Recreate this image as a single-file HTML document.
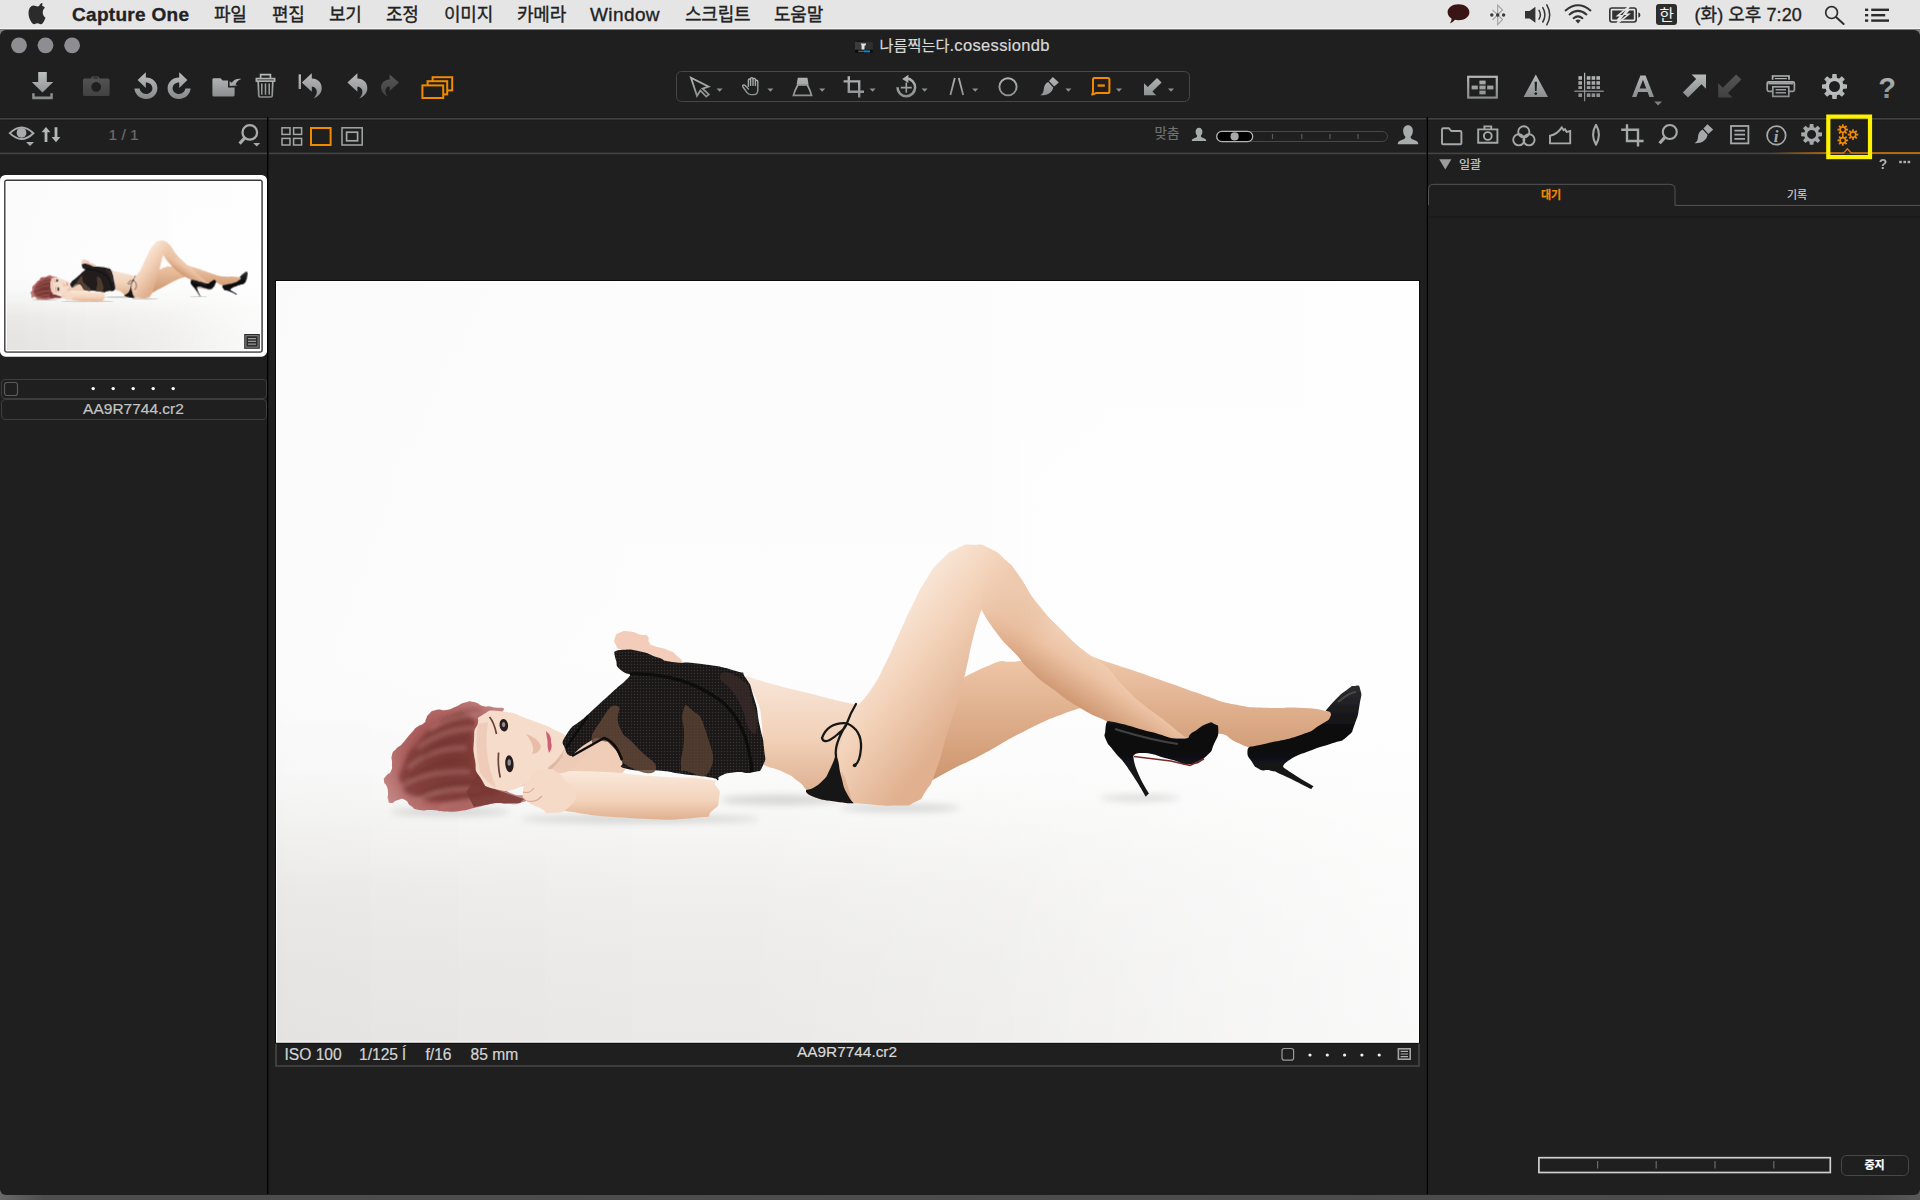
<!DOCTYPE html>
<html lang="ko">
<head>
<meta charset="utf-8">
<title>Capture One</title>
<style>
html,body{margin:0;padding:0;}
body{width:1920px;height:1200px;overflow:hidden;background:#7c7c7c;position:relative;
 font-family:"Liberation Sans","Noto Sans CJK KR",sans-serif;color:#ccc;-webkit-font-smoothing:antialiased;}
.abs{position:absolute;}
#menubar{left:0;top:0;width:1920px;height:28px;background:#e5e5e5;border-bottom:1.600px solid #f1f1f1;color:#222;}
#menubar span{-webkit-text-stroke:0.350px #222;position:absolute;top:4px;font-size:18px;line-height:22px;white-space:nowrap;letter-spacing:-0.2px;}
#win{left:0;top:29.600px;width:1920px;height:1165px;background:#1f1f1f;border-radius:6px 6px 6px 6px;overflow:hidden;}
.hl{position:absolute;height:1px;background:#3e3e3e;}
.vl{position:absolute;width:1px;background:#000;}
.t{position:absolute;white-space:nowrap;-webkit-text-stroke:0.200px currentColor;}
#title{left:879.500px;top:35.500px;font-size:15.2px;line-height:18px;color:#d8d8d8;}
.rr{position:absolute;box-sizing:border-box;border:1px solid #3d3d3d;border-radius:4px;}
#svgall{position:absolute;left:0;top:0;}
</style>
</head>
<body>
<!-- macOS menu bar -->
<div id="menubar" class="abs">
 <span style="left:72px;font-weight:bold;font-size:19px;letter-spacing:0.3px;">Capture One</span>
 <span style="left:214px;">파일</span>
 <span style="left:272px;">편집</span>
 <span style="left:329px;">보기</span>
 <span style="left:386px;">조정</span>
 <span style="left:444px;">이미지</span>
 <span style="left:517px;">카메라</span>
 <span style="left:590px;font-size:19px;letter-spacing:0.4px;">Window</span>
 <span style="left:685px;">스크립트</span>
 <span style="left:774px;">도움말</span>
 <span style="left:1694.5px;letter-spacing:0.05px;">(화) 오후 7:20</span>
</div>

<!-- desktop strip under the window -->
<div class="abs" style="left:0;top:1180px;width:1920px;height:20px;background:linear-gradient(90deg,#6a6a6a 0,#4d4d4d 45px,#4b4b4b 1870px,#585858 1920px);"></div>
<!-- application window -->
<div id="win" class="abs"></div>

<div class="t" id="title">나름찍는다<span style="font-size:16.5px;letter-spacing:0.35px;">.cosessiondb</span></div>

<!-- separators -->
<div class="hl" style="left:0;top:117px;width:1920px;height:4px;background:linear-gradient(#1b1b1b 0 25%,#424242 25% 50%,#333 50% 75%,#1b1b1b 75%);"></div>
<div class="hl" style="left:0;top:152px;width:1920px;height:3px;background:linear-gradient(#2c2c2c 0 33.300%,#434343 33.300% 66.600%,#272727 66.600%);"></div>
<div class="vl" style="left:267px;top:117px;height:1077px;width:2px;background:linear-gradient(90deg,#000 0 50%,#141414 50%);"></div>
<div class="vl" style="left:1426px;top:117px;height:1077px;width:2px;background:linear-gradient(90deg,#171717 0 50%,#000 50%);"></div>

<!-- browser panel (left) -->
<div class="t" style="left:108.5px;top:126px;font-size:15.5px;line-height:17px;color:#6c6c6c;">1 / 1</div>
<div class="rr" style="left:1px;top:379px;width:266px;height:20px;"></div>
<div class="rr" style="left:1px;top:399px;width:266px;height:21px;"></div>
<div class="t" style="left:1px;top:400px;width:265px;text-align:center;font-size:15.500px;line-height:18px;color:#c4c4c4;">AA9R7744.cr2</div>

<!-- viewer -->
<div class="t" style="left:1154.5px;top:126px;font-size:13.5px;line-height:16px;color:#707070;">맞춤</div>
<div class="abs" style="left:275px;top:1043px;width:1145px;height:24px;box-sizing:border-box;border:2px solid #3e3e3e;border-top:none;"></div>
<div class="t" style="left:284.500px;top:1045.500px;font-size:15.600px;line-height:17px;color:#d4d4d4;">ISO 100</div>
<div class="t" style="left:359px;top:1045.500px;font-size:15.600px;line-height:17px;color:#d4d4d4;">1/125 ĺ</div>
<div class="t" style="left:425.500px;top:1045.500px;font-size:15.600px;line-height:17px;color:#d4d4d4;">f/16</div>
<div class="t" style="left:470.500px;top:1045.500px;font-size:15.600px;line-height:17px;color:#d4d4d4;">85 mm</div>
<div class="t" style="left:747px;top:1043px;width:200px;text-align:center;font-size:15.4px;line-height:17px;color:#d8d8d8;">AA9R7744.cr2</div>

<!-- tool panel (right) -->
<div class="abs" style="left:1428px;top:216px;width:492px;height:1.500px;background:#1b1b1b;"></div>
<div class="t" style="left:1459px;top:157px;font-size:12px;line-height:16px;color:#d0d0d0;">일괄</div>
<div class="t" style="left:1531px;top:186.800px;width:40px;text-align:center;font-size:11px;line-height:16px;color:#f28a00;font-weight:bold;">대기</div>
<div class="t" style="left:1777px;top:186.800px;width:40px;text-align:center;font-size:11px;line-height:16px;color:#d0d0d0;">기록</div>
<div class="abs" style="left:1840.500px;top:1154.500px;width:68px;height:21px;box-sizing:border-box;border:1.300px solid #484848;border-radius:5.500px;"></div>
<div class="t" style="left:1841px;top:1157px;width:67px;text-align:center;font-size:11px;line-height:16px;color:#fff;font-weight:bold;">중지</div>

<!-- icons / vector overlay -->
<svg id="svgall" width="1920" height="1200" viewBox="0 0 1920 1200">
<defs>
 <linearGradient id="bgv" gradientUnits="userSpaceOnUse" x1="0" y1="281" x2="0" y2="1043">
  <stop offset="0" stop-color="#fcfcfc"/><stop offset="0.5" stop-color="#fdfdfd"/><stop offset="0.64" stop-color="#fbfbfb"/><stop offset="0.70" stop-color="#f7f7f6"/><stop offset="0.80" stop-color="#f0efee"/><stop offset="0.90" stop-color="#ecebea"/><stop offset="1" stop-color="#eae9e7"/>
 </linearGradient>
 <linearGradient id="bgh" gradientUnits="userSpaceOnUse" x1="276" y1="0" x2="1419" y2="0">
  <stop offset="0" stop-color="#000" stop-opacity="0.018"/><stop offset="0.35" stop-color="#000" stop-opacity="0"/><stop offset="0.6" stop-color="#fff" stop-opacity="0"/><stop offset="1" stop-color="#fff" stop-opacity="0.4"/>
 </linearGradient>
 <linearGradient id="skA" gradientUnits="userSpaceOnUse" x1="890" y1="615" x2="985" y2="690">
  <stop offset="0" stop-color="#f9e7d8"/><stop offset="0.4" stop-color="#f3d3ba"/><stop offset="1" stop-color="#e0b08f"/>
 </linearGradient>
 <linearGradient id="skShin" gradientUnits="userSpaceOnUse" x1="1075" y1="625" x2="1040" y2="680">
  <stop offset="0" stop-color="#f4d6be"/><stop offset="0.5" stop-color="#ecc3a4"/><stop offset="1" stop-color="#d19a75"/>
 </linearGradient>
 <linearGradient id="skB" gradientUnits="userSpaceOnUse" x1="0" y1="660" x2="0" y2="780">
  <stop offset="0" stop-color="#eec5a6"/><stop offset="1" stop-color="#cd966f"/>
 </linearGradient>
 <linearGradient id="skC" gradientUnits="userSpaceOnUse" x1="0" y1="655" x2="0" y2="750">
  <stop offset="0" stop-color="#f0c8aa"/><stop offset="1" stop-color="#d29d78"/>
 </linearGradient>
 <linearGradient id="skT" gradientUnits="userSpaceOnUse" x1="0" y1="675" x2="0" y2="805">
  <stop offset="0" stop-color="#f8e6d8"/><stop offset="0.5" stop-color="#f1d0b7"/><stop offset="1" stop-color="#d9a988"/>
 </linearGradient>
 <linearGradient id="skArm" gradientUnits="userSpaceOnUse" x1="0" y1="770" x2="0" y2="820">
  <stop offset="0" stop-color="#fae9dc"/><stop offset="0.6" stop-color="#f3d3bb"/><stop offset="1" stop-color="#e0b08e"/>
 </linearGradient>
 <radialGradient id="hairg" gradientUnits="userSpaceOnUse" cx="450" cy="760" r="75">
  <stop offset="0" stop-color="#84403c"/><stop offset="0.55" stop-color="#a85a58"/><stop offset="1" stop-color="#c58a88"/>
 </radialGradient>
 <linearGradient id="shoeg" gradientUnits="userSpaceOnUse" x1="0" y1="690" x2="0" y2="790">
  <stop offset="0" stop-color="#2a2a2c"/><stop offset="0.4" stop-color="#0d0d0f"/><stop offset="1" stop-color="#161616"/>
 </linearGradient>
 <linearGradient id="shinfade" gradientUnits="userSpaceOnUse" x1="990" y1="570" x2="1050" y2="640">
  <stop offset="0" stop-color="#000"/><stop offset="1" stop-color="#fff"/>
 </linearGradient>
 <mask id="shinmask" maskUnits="userSpaceOnUse" x="900" y="500" width="400" height="300"><rect x="900" y="500" width="400" height="300" fill="url(#shinfade)"/></mask>
 <linearGradient id="bgw" gradientUnits="userSpaceOnUse" x1="276" y1="0" x2="1419" y2="0">
  <stop offset="0" stop-color="#000" stop-opacity="0.008"/><stop offset="0.4" stop-color="#fff" stop-opacity="0"/><stop offset="1" stop-color="#fff" stop-opacity="0.6"/>
 </linearGradient>
 <linearGradient id="floorfade" gradientUnits="userSpaceOnUse" x1="0" y1="700" x2="0" y2="900">
  <stop offset="0" stop-color="#000"/><stop offset="1" stop-color="#fff"/>
 </linearGradient>
 <mask id="floormask" maskUnits="userSpaceOnUse" x="276" y="281" width="1143" height="762"><rect x="276" y="281" width="1143" height="762" fill="url(#floorfade)"/></mask>
 <pattern id="mesh" width="3" height="3" patternUnits="userSpaceOnUse"><rect width="3" height="3" fill="#1a1818"/><circle cx="1.5" cy="1.5" r="0.7" fill="#3b3230"/></pattern>
 <filter id="soft" x="-5%" y="-5%" width="110%" height="110%"><feGaussianBlur stdDeviation="0.7"/></filter>
 <filter id="soft2" x="-10%" y="-10%" width="120%" height="120%"><feGaussianBlur stdDeviation="2.2"/></filter>
 <filter id="shadow" x="-20%" y="-80%" width="140%" height="260%"><feGaussianBlur stdDeviation="3.5"/></filter>
 <g id="photoart">
  <rect x="276" y="281" width="1143" height="761.500" fill="url(#bgv)"/>
  <rect x="276" y="281" width="1143" height="761.500" fill="url(#bgh)" mask="url(#floormask)"/>
  <rect x="276" y="281" width="1143" height="761.500" fill="url(#bgw)"/>
  <g filter="url(#shadow)" fill="#8f8f8f" opacity="0.32">
   <ellipse cx="640" cy="819" rx="120" ry="4"/>
   <ellipse cx="780" cy="800" rx="60" ry="5"/>
   <ellipse cx="900" cy="808" rx="60" ry="4"/>
   <ellipse cx="450" cy="812" rx="60" ry="4"/>
   <ellipse cx="1140" cy="798" rx="40" ry="3"/>
  </g>
  <g filter="url(#soft)">
   <path d="M1090.0 656.0 C1090.0 656.0 1088.4 655.6 1104.5 661.0 C1120.6 666.4 1116.3 664.8 1138.4 672.3 C1160.5 679.8 1149.2 676.1 1170.7 683.6 C1192.2 691.1 1181.5 687.9 1203.0 694.9 C1224.5 701.9 1213.8 700.3 1235.3 704.6 C1256.8 708.9 1246.1 706.7 1267.6 707.8 C1289.1 708.9 1280.5 706.7 1299.9 707.8 C1319.3 708.9 1313.7 708.3 1325.7 711.0 C1337.7 713.7 1336.0 716.0 1336.0 716.0 C1336.0 716.0 1337.3 722.3 1320.0 731.0 C1302.7 739.7 1306.0 736.0 1284.0 742.0 C1262.0 748.0 1266.5 747.5 1254.0 749.0 C1241.5 750.5 1252.8 749.0 1246.6 746.6 C1240.4 744.2 1245.0 746.0 1235.3 741.7 C1225.6 737.4 1230.9 734.8 1217.5 733.6 C1204.1 732.4 1195.0 738.0 1195.0 738.0 C1195.0 738.0 1177.7 740.0 1150.0 730.0 C1122.3 720.0 1130.0 724.7 1112.0 708.0 C1094.0 691.3 1103.3 697.3 1096.0 680.0 C1088.7 662.7 1090.0 656.0 1090.0 656.0 Z" fill="url(#skC)"/>
   <path d="M1325.7 711.0 C1325.7 711.0 1328.4 706.7 1335.4 699.7 C1342.4 692.7 1340.2 694.6 1346.7 690.0 C1353.2 685.4 1350.2 686.0 1354.8 686.0 C1359.4 686.0 1358.8 683.8 1360.4 690.0 C1362.0 696.2 1361.5 693.3 1359.6 704.6 C1357.7 715.9 1359.1 713.2 1354.8 724.0 C1350.5 734.8 1354.2 730.5 1346.7 736.9 C1339.2 743.3 1343.5 739.0 1332.2 743.3 C1320.9 747.6 1326.8 744.4 1312.8 749.8 C1298.8 755.2 1299.9 753.6 1290.2 759.5 C1280.5 765.4 1283.7 767.5 1283.7 767.5 C1283.7 767.5 1288.3 771.0 1298.3 777.2 C1308.3 783.4 1313.6 786.1 1313.6 786.1 C1313.6 786.1 1311.2 789.3 1311.2 789.3 C1311.2 789.3 1297.2 781.8 1283.7 775.6 C1270.2 769.4 1278.9 772.9 1270.8 770.8 C1262.7 768.7 1266.0 772.4 1259.5 769.2 C1253.0 766.0 1255.4 767.0 1251.4 761.1 C1247.4 755.2 1247.4 756.2 1247.4 751.4 C1247.4 746.6 1251.4 746.6 1251.4 746.6 C1251.4 746.6 1251.4 747.1 1267.6 743.3 C1283.8 739.5 1282.7 741.2 1299.9 735.3 C1317.1 729.4 1309.1 732.1 1319.3 725.6 C1329.5 719.1 1328.5 720.8 1330.6 715.9 C1332.7 711.0 1325.7 711.0 1325.7 711.0 Z" fill="url(#shoeg)"/>
   <path d="M945.0 690.0 C945.0 690.0 962.7 676.2 985.8 666.8 C1008.9 657.4 996.3 662.6 1014.4 661.7 C1032.5 660.8 1021.5 654.6 1040.0 664.0 C1058.5 673.4 1055.0 675.3 1070.0 690.0 C1085.0 704.7 1085.0 708.0 1085.0 708.0 C1085.0 708.0 1084.2 705.7 1063.4 713.8 C1042.6 721.9 1049.7 718.6 1022.5 732.2 C995.3 745.8 1006.2 741.8 981.7 754.7 C957.2 767.6 971.2 759.2 949.0 771.0 C926.8 782.8 915.0 790.0 915.0 790.0 C915.0 790.0 915.0 773.3 925.0 740.0 C935.0 706.7 945.0 690.0 945.0 690.0 Z" fill="url(#skB)"/>
   <path d="M615.0 638.0 C616.3 633.8 615.0 634.7 620.0 632.5 C625.0 630.3 623.3 630.8 630.0 631.5 C636.7 632.2 634.2 633.0 640.0 634.5 C645.8 636.0 644.4 633.2 647.5 636.0 C650.6 638.8 646.8 639.4 649.3 642.8 C651.8 646.2 649.1 644.0 655.0 646.3 C660.9 648.6 660.0 646.9 667.0 649.8 C674.0 652.7 671.7 650.6 676.0 655.0 C680.3 659.4 685.3 661.3 680.0 663.0 C674.7 664.7 673.3 663.3 660.0 660.0 C646.7 656.7 652.7 656.3 640.0 653.0 C627.3 649.7 630.0 652.7 622.0 650.0 C614.0 647.3 618.3 649.0 616.0 645.0 C613.7 641.0 613.7 642.2 615.0 638.0 Z" fill="#f3cdb9"/>
   <path d="M740.0 674.0 C740.0 674.0 751.7 678.3 775.0 684.8 C798.3 691.3 786.7 687.7 810.0 693.5 C833.3 699.3 827.7 698.5 845.0 702.3 C862.3 706.1 862.0 705.0 862.0 705.0 C862.0 705.0 870.0 727.3 868.0 760.0 C866.0 792.7 856.0 803.0 856.0 803.0 C856.0 803.0 852.2 804.1 838.0 802.0 C823.8 799.9 824.0 800.9 813.5 796.8 C803.0 792.7 811.7 795.1 806.5 789.8 C801.3 784.5 805.4 786.8 797.8 781.0 C790.2 775.2 794.9 777.5 783.8 772.3 C772.7 767.1 773.1 769.4 764.5 765.3 C755.9 761.2 758.0 760.0 758.0 760.0 C758.0 760.0 764.0 748.3 762.0 725.0 C760.0 701.7 759.3 707.0 752.0 690.0 C744.7 673.0 740.0 674.0 740.0 674.0 Z" fill="url(#skT)"/>
   <path d="M859.0 704.0 C859.0 704.0 864.2 699.9 873.0 686.5 C881.8 673.1 876.3 682.0 885.3 663.8 C894.3 645.6 891.0 651.4 900.0 632.0 C909.0 612.6 903.4 623.3 912.3 605.6 C921.2 587.9 917.1 594.0 926.6 579.0 C936.1 564.0 930.6 570.8 940.8 560.6 C951.0 550.4 946.3 553.7 957.2 548.4 C968.1 543.1 962.6 544.7 973.5 544.7 C984.4 544.7 979.0 543.1 989.9 548.4 C1000.8 553.7 996.7 551.7 1006.2 560.6 C1015.7 569.5 1007.6 560.0 1018.5 575.0 C1029.4 590.0 1023.9 586.6 1038.9 605.6 C1053.9 624.6 1049.7 617.9 1063.4 632.0 C1077.1 646.1 1080.0 648.0 1080.0 648.0 C1080.0 648.0 1062.0 662.0 1062.0 662.0 C1062.0 662.0 1032.0 668.0 1032.0 668.0 C1032.0 668.0 1026.4 664.5 1014.4 652.5 C1002.4 640.5 1006.9 646.3 996.0 632.0 C985.1 617.7 981.7 609.7 981.7 609.7 C981.7 609.7 978.9 615.1 973.5 636.2 C968.1 657.3 970.8 650.5 965.4 673.0 C960.0 695.5 963.3 683.2 957.2 703.6 C951.1 724.0 954.1 711.9 947.0 734.2 C939.9 756.5 943.1 751.4 936.0 770.5 C928.9 789.6 932.6 781.0 925.6 791.5 C918.6 802.0 924.4 797.3 915.0 802.0 C905.6 806.7 915.0 805.0 897.5 805.6 C880.0 806.2 877.7 805.0 862.5 803.8 C847.3 802.6 852.0 802.0 852.0 802.0 C852.0 802.0 850.7 795.7 846.0 780.0 C841.3 764.3 833.7 780.3 838.0 755.0 C842.3 729.7 859.0 704.0 859.0 704.0 Z" fill="url(#skA)"/>
   <path d="M981.7 609.7 C981.7 609.7 981.2 596.6 986.0 580.0 C990.8 563.4 988.7 566.0 996.0 560.0 C1003.3 554.0 1000.5 557.0 1008.0 562.0 C1015.5 567.0 1008.2 560.5 1018.5 575.0 C1028.8 589.5 1023.9 586.6 1038.9 605.6 C1053.9 624.6 1048.4 617.0 1063.4 632.0 C1078.4 647.0 1070.2 639.6 1083.8 650.5 C1097.4 661.4 1090.6 652.5 1104.2 664.8 C1117.8 677.1 1111.7 674.0 1124.7 687.3 C1137.7 700.6 1130.6 694.0 1143.3 704.6 C1156.0 715.2 1150.3 709.4 1162.7 719.1 C1175.1 728.8 1172.6 727.3 1180.4 733.6 C1188.2 739.9 1186.0 738.0 1186.0 738.0 C1186.0 738.0 1176.3 740.5 1150.0 735.0 C1123.7 729.5 1107.0 721.5 1107.0 721.5 C1107.0 721.5 1113.3 724.6 1104.2 720.0 C1095.1 715.4 1096.7 717.9 1079.7 707.7 C1062.7 697.5 1069.5 701.6 1053.2 689.3 C1036.9 677.0 1043.6 683.2 1030.7 670.9 C1017.8 658.6 1026.0 665.5 1014.4 652.5 C1002.8 639.5 1006.9 646.3 996.0 632.0 C985.1 617.7 981.7 609.7 981.7 609.7 Z" fill="url(#skShin)" mask="url(#shinmask)"/>
   <path d="M1107.0 721.5 C1107.0 721.5 1107.5 720.5 1122.3 724.0 C1137.1 727.5 1131.9 727.2 1151.3 732.0 C1170.7 736.8 1166.4 738.5 1180.4 738.5 C1194.4 738.5 1184.7 736.8 1193.3 732.0 C1201.9 727.2 1199.2 726.7 1206.2 724.0 C1213.2 721.3 1210.3 721.9 1214.3 724.0 C1218.3 726.1 1218.3 724.0 1218.3 730.4 C1218.3 736.8 1218.3 734.7 1214.3 743.3 C1210.3 751.9 1214.3 749.2 1206.2 756.2 C1198.1 763.2 1201.8 763.2 1190.0 764.3 C1178.2 765.4 1186.3 763.3 1170.7 759.5 C1155.1 755.7 1155.7 753.5 1143.3 753.0 C1130.9 752.5 1133.6 757.9 1133.6 757.9 C1133.6 757.9 1133.3 762.2 1138.4 774.0 C1143.5 785.8 1148.9 793.4 1148.9 793.4 C1148.9 793.4 1145.7 796.6 1145.7 796.6 C1145.7 796.6 1139.2 784.3 1128.7 769.2 C1118.2 754.1 1121.7 761.1 1114.2 751.4 C1106.7 741.7 1109.1 747.1 1106.1 740.1 C1103.1 733.1 1105.0 736.6 1105.3 730.4 C1105.6 724.2 1107.0 721.5 1107.0 721.5 Z" fill="url(#shoeg)"/>
   <path d="M1134 756.5 L1170.700 761 L1190 765.500 L1204 759" fill="none" stroke="#7a2c26" stroke-width="1.600"/>
   <path d="M1115 729 Q1150 740 1178 744" fill="none" stroke="#55555a" stroke-width="2.200" opacity="0.7"/>
   <path d="M1338 702 Q1350 692 1356 692" fill="none" stroke="#55555a" stroke-width="2.200" opacity="0.7"/>
   <path d="M806.5 789.8 C806.5 789.8 812.3 790.4 820.5 782.8 C828.7 775.2 826.0 776.9 831.0 767.0 C836.0 757.1 835.4 753.0 835.4 753.0 C835.4 753.0 836.0 751.8 838.0 760.0 C840.0 768.2 838.6 766.4 841.5 777.5 C844.4 788.6 842.7 784.8 846.8 793.3 C850.9 801.8 853.8 803.0 853.8 803.0 C853.8 803.0 851.4 804.1 838.0 802.0 C824.6 799.9 824.0 800.9 813.5 796.8 C803.0 792.7 806.5 789.8 806.5 789.8 Z" fill="#171717"/>
   <path d="M856 704 Q850 714 846.800 723.300 M846.800 723.300 Q828 722 822 738 Q824 746 838 734 Q846 728 846.800 723.300 M846.800 723.300 Q834 744 836 756 M846.800 723.300 Q862 730 861 748 Q860 762 855 765" stroke="#191919" stroke-width="2.300" fill="none" stroke-linecap="round"/>
   <circle cx="854.700" cy="765.300" r="1.900" fill="#191919"/>
   <path d="M552.0 768.0 C550.7 760.0 554.0 760.7 566.0 752.0 C578.0 743.3 575.3 746.7 588.0 742.0 C600.7 737.3 594.7 736.7 604.0 738.0 C613.3 739.3 608.7 736.0 616.0 746.0 C623.3 756.0 631.3 758.0 626.0 768.0 C620.7 778.0 618.7 773.3 600.0 776.0 C581.3 778.7 586.0 778.7 570.0 776.0 C554.0 773.3 553.3 776.0 552.0 768.0 Z" fill="#f0cdb7"/>
   <path d="M548.0 772.0 C548.0 772.0 558.3 770.0 595.0 771.5 C631.7 773.0 621.3 774.0 658.0 776.5 C694.7 779.0 685.7 775.8 705.0 779.0 C724.3 782.2 711.3 779.7 716.0 786.0 C720.7 792.3 720.3 789.7 719.0 798.0 C717.7 806.3 720.7 804.3 712.0 811.0 C703.3 817.7 720.3 815.7 693.0 818.0 C665.7 820.3 672.3 820.3 630.0 818.0 C587.7 815.7 593.3 815.0 566.0 811.0 C538.7 807.0 548.0 806.0 548.0 806.0 C548.0 806.0 548.0 772.0 548.0 772.0 Z" fill="url(#skArm)"/>
   <path d="M503.0 711.0 C507.0 706.0 498.7 708.7 492.0 707.0 C485.3 705.3 489.0 707.7 483.0 706.0 C477.0 704.3 480.0 703.2 474.0 702.0 C468.0 700.8 471.3 700.8 465.0 702.5 C458.7 704.2 461.3 704.5 455.0 707.0 C448.7 709.5 452.3 709.0 446.0 710.0 C439.7 711.0 441.7 708.7 436.0 710.0 C430.3 711.3 432.3 711.0 429.0 714.0 C425.7 717.0 427.7 716.0 426.0 719.0 C424.3 722.0 427.0 720.3 424.0 723.0 C421.0 725.7 420.7 724.3 417.0 727.0 C413.3 729.7 416.3 727.3 413.0 731.0 C409.7 734.7 410.7 733.7 407.0 738.0 C403.3 742.3 405.7 740.3 402.0 744.0 C398.3 747.7 399.3 745.3 396.0 749.0 C392.7 752.7 393.3 750.3 392.0 755.0 C390.7 759.7 392.3 757.7 392.0 763.0 C391.7 768.3 393.0 766.7 391.0 771.0 C389.0 775.3 388.3 772.7 386.0 776.0 C383.7 779.3 383.7 777.3 384.0 781.0 C384.3 784.7 385.7 783.0 387.0 787.0 C388.3 791.0 387.7 789.0 388.0 793.0 C388.3 797.0 387.0 795.7 388.0 799.0 C389.0 802.3 387.7 802.7 391.0 803.0 C394.3 803.3 393.3 801.0 398.0 800.0 C402.7 799.0 400.7 798.0 405.0 800.0 C409.3 802.0 406.3 802.7 411.0 806.0 C415.7 809.3 412.0 808.7 419.0 810.0 C426.0 811.3 423.3 809.5 432.0 810.0 C440.7 810.5 435.7 811.2 445.0 811.5 C454.3 811.8 450.3 812.2 460.0 811.0 C469.7 809.8 465.3 810.0 474.0 808.0 C482.7 806.0 478.7 806.7 486.0 805.0 C493.3 803.3 488.7 803.3 496.0 803.0 C503.3 802.7 500.0 804.0 508.0 804.0 C516.0 804.0 514.0 805.3 520.0 803.0 C526.0 800.7 531.0 801.3 526.0 797.0 C521.0 792.7 519.7 799.0 505.0 790.0 C490.3 781.0 491.7 785.0 482.0 770.0 C472.3 755.0 476.7 761.0 476.0 745.0 C475.3 729.0 471.0 733.3 480.0 722.0 C489.0 710.7 499.0 716.0 503.0 711.0 Z" fill="url(#hairg)"/>
   <g filter="url(#soft2)"><path d="M470.0 716.0 C458.7 709.0 457.3 715.3 440.0 724.0 C422.7 732.7 430.0 728.7 418.0 742.0 C406.0 755.3 409.3 749.7 404.0 764.0 C398.7 778.3 396.7 773.7 402.0 785.0 C407.3 796.3 404.0 792.3 420.0 798.0 C436.0 803.7 430.0 802.0 450.0 802.0 C470.0 802.0 464.0 801.3 480.0 798.0 C496.0 794.7 498.0 800.7 498.0 792.0 C498.0 783.3 488.0 787.7 480.0 772.0 C472.0 756.3 477.3 763.7 474.0 745.0 C470.7 726.3 481.3 723.0 470.0 716.0 Z" fill="#74332f" opacity="0.7"/>
   <path d="M430 730 Q450 716 478 714 M418 748 Q440 730 474 728 M408 768 Q430 748 466 748 M402 786 Q428 770 470 772 M416 800 Q446 786 480 790 M440 808 Q466 798 500 800" stroke="#c08480" stroke-width="2.600" fill="none" opacity="0.6"/>
   <path d="M440 722 Q456 712 480 710 M424 756 Q444 738 470 738 M410 778 Q436 760 468 760 M420 794 Q446 780 476 782" stroke="#5f2724" stroke-width="2.400" fill="none" opacity="0.5"/></g>
   <path d="M478 774 Q486 786 497 790 L524 799 L520 803 L496 803 L474 807 L466 792 Z" fill="#783733" opacity="0.85"/>
   <path d="M548.0 768.0 C546.0 761.3 552.0 760.7 560.0 752.0 C568.0 743.3 562.0 754.0 572.0 742.0 C582.0 730.0 580.7 722.7 590.0 716.0 C599.3 709.3 598.0 713.3 600.0 722.0 C602.0 730.7 602.7 729.3 596.0 742.0 C589.3 754.7 590.0 750.0 580.0 760.0 C570.0 770.0 576.7 769.3 566.0 772.0 C555.3 774.7 550.0 774.7 548.0 768.0 Z" fill="#eecbb6"/>
   <path d="M482.5 715.0 C490.8 710.5 486.0 709.7 502.5 711.5 C519.0 713.3 513.8 714.0 532.0 720.5 C550.2 727.0 545.7 725.2 557.0 731.0 C568.3 736.8 562.8 733.0 566.0 738.0 C569.2 743.0 567.7 740.3 566.5 746.0 C565.3 751.7 568.3 748.0 562.5 755.0 C556.7 762.0 558.8 760.3 549.0 767.0 C539.2 773.7 542.7 768.3 533.0 775.0 C523.3 781.7 532.7 782.3 520.0 787.0 C507.3 791.7 508.3 792.3 495.0 789.0 C481.7 785.7 486.7 786.7 480.0 777.0 C473.3 767.3 477.0 772.3 475.0 760.0 C473.0 747.7 473.2 751.7 474.0 740.0 C474.8 728.3 474.7 733.3 477.5 725.0 C480.3 716.7 474.2 719.5 482.5 715.0 Z" fill="#f6dccb"/>
   <path d="M520 787 Q540 776 549 767 Q560 758 566 746 L562 757 Q552 772 534 782 Z" fill="#dcae98" opacity="0.7"/>
   <path d="M489.500 717 Q494 722 496.500 734" stroke="#6b4038" stroke-width="1.700" fill="none"/>
   <path d="M498.600 752.500 Q497.500 765 500.200 777.500" stroke="#6b4038" stroke-width="1.700" fill="none"/>
   <ellipse cx="503.800" cy="725.200" rx="4.300" ry="6.300" fill="#2b1f1f" transform="rotate(-8 503.800 725.200)"/>
   <ellipse cx="509.400" cy="763.800" rx="4.200" ry="8.500" fill="#2b1f1f" transform="rotate(-4 509.400 763.800)"/>
   <ellipse cx="503.600" cy="724.600" rx="1.700" ry="2.600" fill="#8d8d92"/>
   <ellipse cx="509.200" cy="762.500" rx="1.700" ry="3.200" fill="#8d8d92"/>
   <path d="M546 731 Q552 736 551 742 Q553 748 549 753 Q547 746 547.500 741 Q546.500 736 546 731 Z" fill="#cf5f74"/>
   <path d="M526 734 Q538 738 541 746 Q540 753 532 754 Q536 747 526 734 Z" fill="#e3b39c" opacity="0.75"/>
   <path d="M478 724 Q474 745 480 772 Q486 782 496 788 L490 770 Q484 745 488 722 Z" fill="#e9c2ae" opacity="0.6"/>
   <path d="M523.0 792.0 C523.3 785.0 523.7 786.7 528.0 780.0 C532.3 773.3 529.5 775.7 536.0 772.0 C542.5 768.3 540.2 768.7 547.5 769.0 C554.8 769.3 551.8 769.0 558.0 773.0 C564.2 777.0 560.3 775.3 566.0 781.0 C571.7 786.7 573.7 781.7 575.0 790.0 C576.3 798.3 577.7 798.3 570.0 806.0 C562.3 813.7 562.0 812.3 552.0 813.0 C542.0 813.7 548.3 812.0 540.0 808.0 C531.7 804.0 532.7 806.3 527.0 801.0 C521.3 795.7 522.7 799.0 523.0 792.0 Z" fill="#f6dac8"/>
   <path d="M523 792 Q530 794 534 788 M527 801 Q536 803 542 796" stroke="#d9ab92" stroke-width="1.200" fill="none"/>
   <path d="M614.3 652.4 C614.3 652.4 614.3 650.1 623.0 649.8 C631.7 649.5 628.8 648.9 640.5 651.5 C652.2 654.1 647.5 654.1 658.0 657.6 C668.5 661.1 658.0 659.9 672.0 662.0 C686.0 664.1 679.0 660.9 700.0 663.8 C721.0 666.7 719.8 666.1 735.0 670.8 C750.2 675.5 739.2 668.5 745.6 677.8 C752.0 687.1 749.6 683.1 754.3 698.8 C759.0 714.5 756.4 708.7 759.6 725.0 C762.8 741.3 762.9 734.4 764.0 747.8 C765.1 761.2 766.8 757.1 763.0 765.3 C759.2 773.5 761.9 770.0 752.6 772.3 C743.3 774.6 745.5 771.1 735.0 772.3 C724.5 773.5 726.8 773.2 721.0 775.8 C715.2 778.4 721.0 779.6 717.5 780.2 C714.0 780.8 722.2 779.6 710.5 777.5 C698.8 775.4 700.0 776.3 682.5 774.0 C665.0 771.7 676.7 772.2 658.0 770.5 C639.3 768.8 638.7 772.3 626.5 768.8 C614.3 765.3 626.0 767.6 621.3 760.0 C616.6 752.4 618.9 753.0 612.5 746.0 C606.1 739.0 610.2 740.2 602.0 739.0 C593.8 737.8 598.0 736.8 588.0 742.5 C578.0 748.2 572.0 756.0 572.0 756.0 C572.0 756.0 567.0 756.9 565.3 749.5 C563.6 742.1 559.4 745.5 567.0 733.8 C574.6 722.1 573.4 727.9 588.0 714.5 C602.6 701.1 598.0 705.2 610.8 693.5 C623.6 681.8 620.1 685.9 626.5 679.5 C632.9 673.1 630.0 674.3 630.0 674.3 C630.0 674.3 624.2 673.7 619.5 669.0 C614.8 664.3 617.7 665.8 616.0 660.3 C614.3 654.8 614.3 652.4 614.3 652.4 Z" fill="url(#mesh)"/>
   <path d="M600.0 722.0 C608.3 710.0 610.3 704.0 617.0 706.0 C623.7 708.0 613.7 714.7 620.0 728.0 C626.3 741.3 624.0 732.3 636.0 746.0 C648.0 759.7 658.0 762.0 656.0 769.0 C654.0 776.0 644.0 774.0 630.0 767.0 C616.0 760.0 623.0 756.7 614.0 748.0 C605.0 739.3 610.3 743.0 603.0 741.0 C595.7 739.0 593.0 748.3 592.0 742.0 C591.0 735.7 591.7 734.0 600.0 722.0 Z" fill="#5f4536" opacity="0.85"/>
   <path d="M683.0 712.0 C685.7 702.7 684.3 703.3 692.0 710.0 C699.7 716.7 700.0 712.0 706.0 732.0 C712.0 752.0 716.7 757.0 710.0 770.0 C703.3 783.0 695.7 772.3 686.0 771.0 C676.3 769.7 681.7 777.0 681.0 766.0 C680.3 755.0 683.3 756.0 684.0 738.0 C684.7 720.0 680.3 721.3 683.0 712.0 Z" fill="#5a4234" opacity="0.8"/>
   <path d="M720.0 676.0 C721.3 669.3 731.3 672.0 742.0 680.0 C752.7 688.0 747.0 685.3 752.0 700.0 C757.0 714.7 757.7 714.0 757.0 724.0 C756.3 734.0 756.3 738.0 750.0 730.0 C743.7 722.0 748.0 718.0 738.0 700.0 C728.0 682.0 718.7 682.7 720.0 676.0 Z" fill="#3a2e2a" opacity="0.7"/>
   <path d="M630 674 Q680 672 720 700 Q748 722 752 772" fill="none" stroke="#0c0c0c" stroke-width="3.200"/>
   <path d="M566 748 L588 716 M572 756 L604 738 Q616 742 622 760" fill="none" stroke="#0e0e0e" stroke-width="2.400"/>
  </g>
 </g>
</defs>
<!-- photo -->
<rect x="275" y="280" width="1145" height="763.500" fill="#0a0a0a"/>
<use href="#photoart"/>
<rect x="276.500" y="281.500" width="1142" height="760.500" fill="none" stroke="#ffffff" stroke-width="1"/>
<rect x="0" y="175" width="267" height="181.700" rx="5.500" fill="#ffffff"/>
<use href="#photoart" transform="translate(-54.830,119.360) scale(0.2222)"/>
<rect x="4.900" y="180.200" width="257.100" height="171.800" rx="2" fill="none" stroke="#3a3a3a" stroke-width="1.600"/>
<rect x="6.200" y="181.500" width="254.500" height="169.200" fill="none" stroke="#ffffff" stroke-width="1"/>
<!-- thumb badge -->
<rect x="244.200" y="334" width="15.600" height="14.800" fill="#2b2b2b"/>
<rect x="245.900" y="335.700" width="12.200" height="11.400" fill="none" stroke="#8a8a8a" stroke-width="1"/>
<path d="M248 338.700 L256 338.700 M248 341.400 L256 341.400 M248 344.200 L256 344.200" stroke="#9a9a9a" stroke-width="1.300"/>

<defs>
 <linearGradient id="ig" gradientUnits="userSpaceOnUse" x1="0" y1="72" x2="0" y2="100">
  <stop offset="0" stop-color="#bcbfbf"/><stop offset="1" stop-color="#858888"/>
 </linearGradient>
 <linearGradient id="igd" gradientUnits="userSpaceOnUse" x1="0" y1="72" x2="0" y2="100">
  <stop offset="0" stop-color="#585858"/><stop offset="1" stop-color="#3e3e3e"/>
 </linearGradient>
 <path id="dd" d="M0 0 L6 0 L3 3.2 Z" fill="#8e9090"/>
</defs>

<!-- ===== menu bar icons ===== -->
<g id="mb">
 <!-- apple -->
 <path d="M40.6 3.6 C40.7 5 40.2 6.3 39.4 7.3 C38.6 8.3 37.3 9 36.1 8.9 C35.9 7.6 36.5 6.2 37.3 5.3 C38.1 4.3 39.5 3.6 40.6 3.6 Z M44.6 19.2 C44 20.6 43.7 21.2 42.9 22.4 C41.8 24.1 40.3 26.2 38.4 26.2 C36.7 26.2 36.3 25.1 34 25.1 C31.7 25.1 31.2 26.2 29.5 26.2 C27.6 26.2 26.2 24.3 25.1 22.6 C22 17.9 21.7 12.4 23.6 9.5 C24.9 7.4 27 6.2 29 6.2 C31 6.2 32.3 7.3 34 7.3 C35.6 7.3 36.6 6.2 39 6.2 C40.8 6.2 42.6 7.2 43.9 8.8 C39.6 11.2 40.3 17.4 44.6 19.2 Z" transform="translate(11.420,-0.380) scale(0.764,0.938)" fill="#2b2b2b"/>
 <!-- speech bubble -->
 <path d="M1458.5 4.3 C1464.6 4.3 1469.4 7.8 1469.4 12.3 C1469.4 16.8 1464.6 20.3 1458.5 20.3 C1457.2 20.3 1456 20.1 1454.9 19.8 C1453.6 21.4 1451.6 22.9 1449.9 23.4 C1450.9 22.2 1451.6 20.4 1451.5 18.6 C1449.1 17.1 1447.6 14.9 1447.6 12.3 C1447.6 7.8 1452.4 4.3 1458.5 4.3 Z" fill="#3a1515"/>
 <!-- bluetooth-ish -->
 <path d="M1492.5 9.8 L1502.5 19.6 L1497.7 24.6 L1497.7 5.2 L1502.5 10 L1492.5 20" fill="none" stroke="#a2a2a2" stroke-width="1.1"/>
 <circle cx="1491.8" cy="15" r="1.7" fill="#3a3a3a"/><circle cx="1497.7" cy="15" r="1.7" fill="#3a3a3a"/><circle cx="1503.6" cy="15" r="1.7" fill="#3a3a3a"/>
 <!-- volume -->
 <path d="M1525 11 L1529.6 11 L1535.4 6.8 L1535.4 22.8 L1529.6 18.6 L1525 18.6 Z" fill="#333"/>
 <path d="M1539 10.4 Q1541.8 14.8 1539 19.2 M1542.8 7.6 Q1547 14.8 1542.8 22 M1546.8 4.8 Q1552.6 14.8 1546.8 24.8" fill="none" stroke="#333" stroke-width="1.5" stroke-linecap="round"/>
 <!-- wifi -->
 <path d="M1565.6 10.4 Q1578 0.2 1590.4 10.4 M1569.6 14.4 Q1578 7.4 1586.4 14.4 M1573.6 18.2 Q1578 14.6 1582.4 18.2" fill="none" stroke="#333" stroke-width="2" stroke-linecap="round"/>
 <path d="M1575.4 20.6 Q1578 18.4 1580.6 20.6 L1578 23.4 Z" fill="#333"/>
 <!-- battery -->
 <rect x="1609.8" y="8" width="26.4" height="14" rx="2.2" fill="none" stroke="#333" stroke-width="1.6"/>
 <path d="M1638.3 12.2 Q1640.4 13 1640.4 15 Q1640.4 17 1638.3 17.8 Z" fill="#333"/>
 <path d="M1612.2 10.4 L1624.6 10.4 L1616.8 19.6 L1612.2 19.6 Z M1629.4 10.4 L1633.8 10.4 L1633.8 19.6 L1621.4 19.6 Z" fill="#333"/>
 <path d="M1629.4 6.2 L1617.6 15.8 L1622.6 15.8 L1616.8 23.8 L1628.8 14.2 L1623.8 14.2 Z" fill="#333" stroke="#e5e5e5" stroke-width="1.5"/>
 <!-- input method -->
 <rect x="1656" y="4" width="21" height="21" rx="3" fill="#2d2d2d"/>
 <text x="1666.5" y="21" font-family="'Liberation Sans','Noto Sans CJK KR',sans-serif" font-size="16" fill="#f2f2f2" text-anchor="middle">한</text>
 <!-- spotlight -->
 <circle cx="1831.6" cy="12.6" r="5.9" fill="none" stroke="#2e2e2e" stroke-width="1.7"/>
 <path d="M1836 17 L1843.6 24" stroke="#2e2e2e" stroke-width="2" stroke-linecap="round"/>
 <!-- notification list -->
 <g fill="#2b2b2b">
  <rect x="1865" y="8.6" width="3.2" height="2.4"/><rect x="1865" y="14" width="3.2" height="2.4"/><rect x="1865" y="19.4" width="3.2" height="2.4"/>
  <rect x="1871.2" y="8.6" width="17.8" height="2.4"/><rect x="1871.2" y="14" width="14" height="2.4"/><rect x="1871.2" y="19.4" width="17.8" height="2.4"/>
 </g>
</g>

<!-- ===== title bar ===== -->
<circle cx="19" cy="45.300" r="7.900" fill="#8e8d92"/>
<circle cx="45.500" cy="45.300" r="7.900" fill="#8e8d92"/>
<circle cx="72.100" cy="45.300" r="7.900" fill="#8e8d92"/>
<!-- document proxy icon -->
<g>
 <rect x="857" y="40.400" width="6.400" height="2.400" rx="0.800" fill="#141414"/>
 <rect x="855" y="42" width="17.800" height="10.800" rx="1.300" fill="#2f2f2f"/>
 <rect x="855" y="42" width="8" height="8" fill="#424242" opacity="0.700"/>
 <rect x="855" y="49.800" width="17.800" height="3" rx="1" fill="#090909"/>
 <path d="M860.600 43.400 L866.200 43.400 L865.600 45.400 L864.600 45.600 L864.400 49.600 L861.600 49.600 L861.600 45.400 Z" fill="#e2e2e2"/>
 <rect x="858.200" y="50.600" width="5.800" height="1.500" fill="#5c5c5c"/>
 <rect x="864" y="50.400" width="6" height="1.900" fill="#0a8ccc"/>
</g>

<!-- ===== main toolbar (left group) ===== -->
<g fill="url(#ig)">
 <!-- import -->
 <path d="M38.2 72 L46.8 72 L46.8 82 L53.2 82 L42.5 92.6 L31.8 82 L38.2 82 Z"/>
 <path d="M32.2 93.2 L34.6 93.2 L34.6 96.6 L50.4 96.6 L50.4 93.2 L52.8 93.2 L52.8 99.2 L32.2 99.2 Z"/>
 <!-- rotate left -->
 <path d="M145.8 72.2 L145.8 77.6 C152.6 77.6 157.4 82.4 157.4 88.2 C157.4 94.2 152.4 99 146 99 C139.800 99 134.800 94.4 134.400 88.6 L139.6 88.6 C140 91.600 142.700 94 146 94 C149.600 94 152.400 91.400 152.400 88.200 C152.400 85 149.600 82.600 145.800 82.600 L145.800 88 L137.600 80 Z"/>
 <!-- rotate right -->
 <path d="M179.200 72.200 L179.200 77.600 C172.400 77.600 167.600 82.400 167.600 88.200 C167.600 94.200 172.600 99 179 99 C185.200 99 190.200 94.400 190.600 88.600 L185.400 88.600 C185 91.600 182.300 94 179 94 C175.400 94 172.600 91.400 172.600 88.200 C172.600 85 175.400 82.600 179.200 82.600 L179.200 88 L187.400 80 Z"/>
 <!-- move to folder -->
 <path d="M212.400 79.600 Q212.400 78.200 213.800 78.200 L220.600 78.200 L222.600 80.400 L228 80.400 L228 87.400 L234.600 87.400 L234.600 95 Q234.600 96.600 233 96.600 L214 96.600 Q212.400 96.600 212.400 95 Z"/>
 <path d="M229.600 86 L229.600 81.200 L231.800 82.800 C233.800 79.800 237 78.400 241.400 79 C238.600 79.800 236.600 81.600 235.600 84.400 L237.600 85.400 Z"/>
 <!-- undo all (|<-) -->
 <path d="M298.600 74.400 L301 74.400 L301 89 L298.600 89 Z"/>
 <path d="M311.800 73.200 L311.800 78.600 C319 79 322.600 84 321.600 90 C320.800 94 317.800 96.800 313.600 98.400 C316.800 95.400 317.600 91.600 316 89 C315 87.400 313.600 86.800 311.800 86.800 L311.800 91.800 L301.800 82.400 Z"/>
 <!-- undo -->
 <path d="M357.400 73.200 L357.400 78.600 C364.600 79 368.200 84 367.200 90 C366.400 94 363.400 96.800 359.200 98.400 C362.400 95.400 363.200 91.600 361.600 89 C360.600 87.400 359.200 86.800 357.400 86.800 L357.400 91.800 L347.400 82.400 Z"/>
</g>
<!-- capture (disabled) -->
<g fill="url(#igd)">
 <path d="M92 76.400 L98.600 76.400 L99.600 78.600 L108 78.600 Q109.600 78.600 109.600 80.200 L109.600 94.400 Q109.600 96 108 96 L84.600 96 Q83 96 83 94.400 L83 80.200 Q83 78.600 84.600 78.600 L91 78.600 Z M96.200 82 A4.900 4.900 0 1 0 96.201 82 Z M93.200 77.400 L93.200 78.400 L98 78.400 L98 77.400 Z" fill-rule="evenodd"/>
 <!-- redo (disabled) -->
 <path d="M389.600 74.600 L389.600 79.400 C383.400 79.800 380.400 84 381.200 89 C381.800 92.600 384.400 95 388 96.400 C385.400 93.800 384.600 90.600 386 88.400 C386.800 87 388 86.400 389.600 86.400 L389.600 91 L399 82.600 Z"/>
</g>
<!-- trash -->
<g fill="none" stroke="url(#ig)" stroke-width="1.7">
 <path d="M256.400 78.600 L274.600 78.600 L274.600 81.200 L256.400 81.200 Z M260.600 78.400 L260.600 74.600 L270.400 74.600 L270.400 78.400"/>
 <path d="M258.200 81.400 L258.800 96 Q258.900 97 260 97 L271 97 Q272.100 97 272.200 96 L272.800 81.400"/>
 <path d="M261.800 83.600 L261.800 94.800 M265.500 83.600 L265.500 94.800 M269.200 83.600 L269.200 94.800" stroke-width="1.5"/>
</g>
<!-- variants stack (orange) -->
<g fill="#1f1f1f" stroke="#f28a00" stroke-width="2">
 <rect x="432.600" y="77.200" width="19.600" height="13.200"/>
 <rect x="427.600" y="81.200" width="19.600" height="13.200"/>
 <rect x="422.400" y="85.400" width="20.800" height="12.600"/>
</g>

<!-- ===== cursor tools group ===== -->
<rect x="676.500" y="71.500" width="513" height="30" rx="5" fill="none" stroke="#474747" stroke-width="1"/>
<g fill="none" stroke="url(#ig)" stroke-width="1.800" stroke-linejoin="miter">
 <!-- select arrow -->
 <path d="M691 77.800 L708.600 86.600 L702.600 88.600 L708.800 94.400 L706.200 96.600 L700.400 90.400 L697 95.800 Z"/>
 <!-- hand -->
 <path d="M748.400 86.400 L748.400 80.200 Q748.400 79 749.500 79 Q750.600 79 750.600 80.200 L750.600 85.400 M750.600 80 L750.600 78.800 Q750.600 77.600 751.800 77.600 Q753 77.600 753 78.800 L753 85.400 M753 79.600 Q753 78.400 754.200 78.400 Q755.400 78.400 755.400 79.600 L755.400 85.600 M755.400 81.400 Q755.400 80.200 756.600 80.200 Q757.800 80.200 757.800 81.400 L757.800 90 Q757.800 94.600 753.600 94.600 L750.800 94.600 Q748.400 94.600 746.800 92.400 L743 87 Q742.200 85.800 743.200 85.200 Q744.200 84.600 745.200 85.600 L748.400 89" stroke-width="1.400" stroke-linecap="round" stroke-linejoin="round"/>
 <!-- keystone -->
 <path d="M797.800 85 L807.400 85 Q810 90 811.600 95.400 L793.400 95.400 Q795 90 797.800 85 Z" stroke-width="1.700"/>
 <!-- lines /\ -->
 <path d="M954.800 78 L950.400 95 M958.800 78 L963.200 95" stroke-width="1.800"/>
 <!-- circle -->
 <circle cx="1008" cy="86.800" r="8.600" stroke-width="1.900"/>
</g>
<path d="M797.800 77.800 L807.400 77.800 L808.600 84.600 L796.600 84.600 Z" fill="url(#ig)"/>
<!-- crop -->
<path d="M847.600 76.200 L850 76.200 L850 90.600 L864 90.600 L864 93 L850 93 L847.600 93 Z M843.600 80.200 L860.400 80.200 L860.400 97.400 L858 97.400 L858 82.600 L843.600 82.600 Z" fill="url(#ig)"/>
<!-- rotate-straighten -->
<g fill="none" stroke="url(#ig)" stroke-width="2.500">
 <path d="M897.500 87.300 A8.800 8.800 0 1 0 906.600 78.600"/>
 <path d="M906.300 82.400 L906.300 92.800 M900.800 87.600 L911.800 87.600" stroke-width="1.600"/>
</g>
<path d="M908.400 74.800 L908.400 83 L902.200 78.900 Z" fill="url(#ig)"/>
<!-- brush -->
<path d="M1052.800 77 L1058.800 82.600 L1054.200 86.600 L1049 81 Z" fill="url(#ig)"/>
<path d="M1048.200 82 L1053.200 87.400 C1052.400 91.600 1048.600 95.600 1040.200 95.200 C1043.200 93.800 1043.600 91.600 1043.800 89 C1044 85.600 1045.600 83.200 1048.200 82 Z" fill="url(#ig)"/>
<!-- annotation (orange) -->
<path d="M1094.400 78 L1107.800 78 Q1109.400 78 1109.400 79.600 L1109.400 91.400 Q1109.400 93 1107.800 93 L1096.400 93 L1092.200 94.600 L1093 92 L1093 79.600 Q1093 78 1094.400 78 Z" fill="none" stroke="#f28a00" stroke-width="2" stroke-linejoin="round"/>
<rect x="1097.600" y="84.400" width="7.200" height="2.300" fill="#f28a00"/>
<!-- SW arrow -->
<path d="M1157 78 L1161.600 82.400 L1152.400 91.400 L1156.200 95.200 L1144 95.200 L1144 83.200 L1147.800 87 Z" fill="url(#ig)"/>
<!-- dropdown triangles -->
<use href="#dd" x="716.600" y="88.600"/><use href="#dd" x="767.400" y="88.600"/><use href="#dd" x="819.200" y="88.600"/><use href="#dd" x="869.600" y="88.600"/><use href="#dd" x="921.600" y="88.600"/>
<use href="#dd" x="972.200" y="88.600"/><use href="#dd" x="1065.400" y="88.600"/><use href="#dd" x="1116" y="88.600"/><use href="#dd" x="1168" y="88.600"/>

<!-- ===== main toolbar (right group) ===== -->
<!-- exposure evaluation grid -->
<g>
 <rect x="1468.200" y="76.800" width="28.600" height="20.800" fill="none" stroke="url(#ig)" stroke-width="2.200"/>
 <g fill="url(#ig)">
  <rect x="1479.400" y="80.600" width="6.200" height="3.800"/>
  <rect x="1471.600" y="85.600" width="6.200" height="3.800"/><rect x="1479.400" y="85.600" width="6.200" height="3.800"/><rect x="1487.200" y="85.600" width="6.200" height="3.800"/>
  <rect x="1479.400" y="90.600" width="6.200" height="3.800"/>
 </g>
</g>
<!-- warning -->
<path d="M1535.800 74.600 L1548 97 L1523.600 97 Z M1534.600 81.800 L1537 81.800 L1536.600 91 L1535 91 Z M1535.800 92.200 A1.400 1.400 0 1 0 1535.801 92.200 Z" fill="url(#ig)" fill-rule="evenodd"/>
<!-- grid with crosshair -->
<g fill="url(#ig)">
 <rect x="1578.400" y="76.200" width="3.600" height="3.600"/><rect x="1586.800" y="76.200" width="3.600" height="3.600"/><rect x="1591.600" y="76.200" width="3.600" height="3.600"/><rect x="1596.400" y="76.200" width="3.600" height="3.600"/>
 <rect x="1578.400" y="81.200" width="3.600" height="3.600"/><rect x="1586.800" y="81.200" width="3.600" height="3.600"/><rect x="1591.600" y="81.200" width="3.600" height="3.600"/><rect x="1596.400" y="81.200" width="3.600" height="3.600"/>
 <rect x="1578.400" y="86.200" width="3.600" height="2.800"/><rect x="1586.800" y="86.200" width="3.600" height="2.800"/><rect x="1591.600" y="86.200" width="3.600" height="2.800"/><rect x="1596.400" y="86.200" width="3.600" height="2.800"/>
 <rect x="1578.400" y="93.400" width="3.600" height="3.600"/><rect x="1586.800" y="93.400" width="3.600" height="3.600"/><rect x="1591.600" y="93.400" width="3.600" height="3.600"/><rect x="1596.400" y="93.400" width="3.600" height="3.600"/>
 <rect x="1584" y="72.800" width="1.200" height="28.400"/><rect x="1574.400" y="90.600" width="29.400" height="1.200"/>
</g>
<!-- A (text) -->
<path d="M1640.400 75.400 L1645.600 75.400 L1654 97 L1649.400 97 L1647.600 92 L1638.200 92 L1636.400 97 L1632 97 Z M1643 79.800 L1639.600 88.400 L1646.200 88.400 Z" fill="url(#ig)" fill-rule="evenodd"/>
<path d="M1654.200 101.400 L1662 101.400 L1658.100 105.600 Z" fill="#7d8080"/>
<!-- NE arrow -->
<path d="M1691.600 74.400 L1706 74.400 L1706 88.800 L1701.400 84.200 L1688 97.600 L1682.800 92.400 L1696.200 79 Z" fill="url(#ig)"/>
<!-- SW arrow (disabled) -->
<path d="M1732.600 97.600 L1718.200 97.600 L1718.200 83.200 L1722.800 87.800 L1736.200 74.400 L1741.400 79.600 L1728 93 Z" fill="url(#igd)"/>
<!-- printer -->
<g fill="none" stroke="url(#ig)" stroke-width="1.700">
 <path d="M1772.600 79.800 L1772.600 76 L1789 76 L1789 79.800"/>
 <path d="M1774.800 78.600 L1786.800 78.600" stroke-width="1.200"/>
 <path d="M1772.800 91.400 L1768.800 91.400 Q1767.200 91.400 1767.200 89.800 L1767.200 83.400 Q1767.200 81.800 1768.800 81.800 L1792.800 81.800 Q1794.400 81.800 1794.400 83.400 L1794.400 89.800 Q1794.400 91.400 1792.800 91.400 L1788.800 91.400"/>
 <path d="M1768.400 83.400 L1793.200 83.400" stroke-width="2"/>
 <rect x="1772.800" y="86.800" width="16" height="9.600"/>
 <path d="M1775.600 89.800 L1786 89.800 M1775.600 92.800 L1786 92.800" stroke-width="1.500"/>
</g>
<!-- gear (big) -->
<g id="gearbig" transform="translate(1834.500,86.500)">
 <circle r="7.300" fill="none" stroke="url(#ig)" stroke-width="3.600" transform="translate(-1834.500,-86.500) translate(1834.500,86.500)"/>
</g>
<g fill="url(#ig)">
 <path id="tooth" d="M1832.400 74 L1836.600 74 L1837 78.400 L1832 78.400 Z"/>
 <use href="#tooth" transform="rotate(45 1834.500 86.500)"/><use href="#tooth" transform="rotate(90 1834.500 86.500)"/><use href="#tooth" transform="rotate(135 1834.500 86.500)"/>
 <use href="#tooth" transform="rotate(180 1834.500 86.500)"/><use href="#tooth" transform="rotate(225 1834.500 86.500)"/><use href="#tooth" transform="rotate(270 1834.500 86.500)"/><use href="#tooth" transform="rotate(315 1834.500 86.500)"/>
</g>
<!-- help ? -->
<text x="1887" y="98" font-family="'Liberation Sans',sans-serif" font-weight="bold" font-size="29" text-anchor="middle" fill="url(#ig)">?</text>

<!-- ===== browser sub toolbar ===== -->
<g>
 <path d="M9.800 133.200 Q21.500 121.600 33.400 133.200 Q21.500 144.800 9.800 133.200 Z" fill="none" stroke="#a9acac" stroke-width="1.900"/>
 <circle cx="21.500" cy="132.800" r="4.900" fill="#a9acac"/>
 <path d="M26 142 L34 142 L30 146 Z" fill="#a9acac"/>
 <path d="M46 127 L50.400 132.200 L47.400 132.200 L47.400 142 L44.600 142 L44.600 132.200 L41.600 132.200 Z" fill="#b4b7b7"/>
 <path d="M56 142.200 L51.600 137 L54.600 137 L54.600 127.200 L57.400 127.200 L57.400 137 L60.400 137 Z" fill="#b4b7b7"/>
 <!-- search -->
 <circle cx="249.800" cy="132.400" r="7.300" fill="none" stroke="#a9acac" stroke-width="2.300"/>
 <path d="M244.600 138 L239.600 143.600" stroke="#a9acac" stroke-width="3.200" stroke-linecap="butt"/>
 <path d="M253.200 143 L260.200 143 L256.700 146.400 Z" fill="#a9acac"/>
</g>
<!-- ===== viewer mode buttons ===== -->
<g fill="none" stroke="#a4a7a7" stroke-width="1.500">
 <rect x="282" y="127.800" width="8" height="6.600"/><rect x="293.600" y="127.800" width="8" height="6.600"/>
 <rect x="282" y="138.400" width="8" height="6.600"/><rect x="293.600" y="138.400" width="8" height="6.600"/>
 <rect x="342" y="127.800" width="20.200" height="17.200"/>
 <rect x="346.600" y="132.200" width="11" height="8.600" stroke-width="1.700"/>
</g>
<rect x="311" y="128" width="19.600" height="17" fill="none" stroke="#f28a00" stroke-width="2"/>
<!-- ===== zoom slider ===== -->
<g>
 <path id="pers" d="M1199 127.800 C1201.200 127.800 1202.400 129.600 1202.400 131.800 C1202.400 133.600 1201.600 135 1200.800 135.800 C1200.800 137.200 1202 137.600 1203.800 138.200 C1205.600 138.800 1206.200 139.600 1206.200 141 L1191.800 141 C1191.800 139.600 1192.400 138.800 1194.200 138.200 C1196 137.600 1197.200 137.200 1197.200 135.800 C1196.400 135 1195.600 133.600 1195.600 131.800 C1195.600 129.600 1196.800 127.800 1199 127.800 Z" fill="#a9acac"/>
 <use href="#pers" transform="translate(1408,134.700) scale(1.430) translate(-1199,-134.400)"/>
 <rect x="1216.500" y="131.500" width="171" height="10" rx="5" fill="none" stroke="#484848" stroke-width="1"/>
 <path d="M1272.500 134 L1272.500 139 M1301.800 134 L1301.800 139 M1330 134 L1330 139 M1358 134 L1358 139" stroke="#5a5a5a" stroke-width="1.200"/>
 <rect x="1216.700" y="131.400" width="36" height="10.200" rx="5.100" fill="#000" stroke="#b4b4b4" stroke-width="1.300"/>
 <circle cx="1234.600" cy="136.400" r="4.100" fill="#a9a9a9"/>
</g>

<!-- ===== tool tabs ===== -->
<g fill="none" stroke="#a6a9a9" stroke-width="1.900" stroke-linejoin="round">
 <!-- library folder -->
 <path d="M1442 143.200 L1442 129.400 Q1442 128.200 1443.200 128.200 L1448.800 128.200 L1451.200 131 L1460.200 131 Q1461.400 131 1461.400 132.200 L1461.400 143.200 Q1461.400 144.200 1460.200 144.200 L1443.200 144.200 Q1442 144.200 1442 143.200 Z"/>
 <!-- capture camera -->
 <path d="M1478.200 129.400 L1497.400 129.400 L1497.400 142.800 L1478.200 142.800 Z M1484.400 129 L1484.400 126.400 L1491.200 126.400 L1491.200 129" stroke-linejoin="miter"/>
 <circle cx="1487.800" cy="136" r="3.900"/>
 <!-- color circles -->
 <circle cx="1523.800" cy="131.800" r="5.600"/><circle cx="1518.800" cy="139.800" r="5.600"/><circle cx="1529" cy="139.800" r="5.600"/>
 <!-- exposure histogram -->
 <path d="M1550 143.400 L1550 135.800 Q1557 134.600 1561.800 127.400 L1563.600 130.200 L1565 129.200 L1566.600 132 L1570.200 131 L1570.200 143.400 Z" stroke-linejoin="miter"/>
 <!-- lens -->
 <path d="M1596 124.800 Q1601.800 134.800 1596 144.800 Q1590.200 134.800 1596 124.800 Z" stroke-width="2"/>
 <!-- details magnifier -->
 <circle cx="1669.800" cy="132" r="7" stroke-width="2.100"/>
</g>
<path d="M1664.800 137.400 L1659.600 143.200" stroke="#a6a9a9" stroke-width="3.200"/>
<!-- crop tab -->
<path d="M1625.800 124.200 L1628.200 124.200 L1628.200 139.800 L1643.600 139.800 L1643.600 142.200 L1628.200 142.200 L1625.800 142.200 Z M1621.200 128.600 L1639.200 128.600 L1639.200 146.400 L1636.800 146.400 L1636.800 131 L1621.200 131 Z" fill="#a6a9a9"/>
<!-- local adjustments brush -->
<path d="M1707.400 124.200 L1713.200 129.600 L1708.400 134 L1703.400 128.400 Z" fill="#a6a9a9"/>
<path d="M1702.600 129.400 L1707.600 134.800 C1706.800 139.400 1703 143.800 1694.400 143.200 C1697.400 141.800 1697.800 139.400 1698 136.800 C1698.200 133.200 1700 130.600 1702.600 129.400 Z" fill="#a6a9a9"/>
<!-- adjustments list -->
<rect x="1731" y="126" width="17.400" height="17.400" fill="none" stroke="#a6a9a9" stroke-width="1.800"/>
<path d="M1734.400 130.600 L1745 130.600 M1734.400 134.700 L1745 134.700 M1734.400 138.800 L1745 138.800" stroke="#a6a9a9" stroke-width="1.700"/>
<!-- metadata info -->
<circle cx="1776.400" cy="135.400" r="9.300" fill="none" stroke="#a6a9a9" stroke-width="1.700"/>
<text x="1776.200" y="141.600" font-family="'Liberation Serif',serif" font-style="italic" font-weight="bold" font-size="17" text-anchor="middle" fill="#a6a9a9">i</text>
<!-- output gear -->
<circle cx="1811.600" cy="134.400" r="6" fill="none" stroke="#a6a9a9" stroke-width="3"/>
<g fill="#a6a9a9">
 <path id="tooth2" d="M1809.800 124 L1813.400 124 L1813.800 127.800 L1809.400 127.800 Z"/>
 <use href="#tooth2" transform="rotate(45 1811.600 134.400)"/><use href="#tooth2" transform="rotate(90 1811.600 134.400)"/><use href="#tooth2" transform="rotate(135 1811.600 134.400)"/>
 <use href="#tooth2" transform="rotate(180 1811.600 134.400)"/><use href="#tooth2" transform="rotate(225 1811.600 134.400)"/><use href="#tooth2" transform="rotate(270 1811.600 134.400)"/><use href="#tooth2" transform="rotate(315 1811.600 134.400)"/>
</g>
<!-- batch gears (orange, active) -->
<defs>
 <g id="sgear">
  <circle r="2.700" fill="none" stroke="#f28a00" stroke-width="1.700"/>
  <g fill="#f28a00">
   <rect id="st" x="-0.900" y="-5.300" width="1.800" height="2.200"/>
   <use href="#st" transform="rotate(45)"/><use href="#st" transform="rotate(90)"/><use href="#st" transform="rotate(135)"/><use href="#st" transform="rotate(180)"/><use href="#st" transform="rotate(225)"/><use href="#st" transform="rotate(270)"/><use href="#st" transform="rotate(315)"/>
  </g>
 </g>
 <linearGradient id="oline" gradientUnits="userSpaceOnUse" x1="1770" y1="0" x2="1830" y2="0">
  <stop offset="0" stop-color="#d97a00" stop-opacity="0"/><stop offset="1" stop-color="#d97a00" stop-opacity="1"/>
 </linearGradient>
</defs>
<use href="#sgear" x="1842.800" y="129.600"/>
<use href="#sgear" x="1853" y="134.600"/>
<use href="#sgear" x="1842.800" y="140.400"/>
<!-- active-tab underline with caret -->
<path d="M1770 153 L1843.600 153 L1847.400 148.800 L1851.200 153 L1920 153" fill="none" stroke="url(#oline)" stroke-width="1.300"/>
<!-- yellow highlight box -->
<rect x="1828.300" y="116.600" width="41.700" height="40.500" fill="none" stroke="#fff200" stroke-width="4.200"/>

<!-- ===== tool header ===== -->
<path d="M1439.200 159.200 L1451.400 159.200 L1445.300 169.400 Z" fill="#9c9c9c"/>
<text x="1883" y="169" font-family="'Liberation Sans',sans-serif" font-weight="bold" font-size="14" text-anchor="middle" fill="#b0b0b0">?</text>
<g fill="#b0b0b0"><rect x="1899.200" y="160.800" width="2.600" height="2.400"/><rect x="1903.400" y="160.800" width="2.600" height="2.400"/><rect x="1907.600" y="160.800" width="2.600" height="2.400"/></g>
<!-- tabs outline -->
<path d="M1428.500 205 L1428.500 189.500 Q1428.500 184.300 1433.700 184.300 L1669.800 184.300 Q1675 184.300 1675 189.500 L1675 205.400 L1920 205.400" fill="none" stroke="#555555" stroke-width="1"/>
<!-- progress bar -->
<rect x="1538.900" y="1157.700" width="291.400" height="14.800" fill="none" stroke="#cfcfcf" stroke-width="1.700"/>
<path d="M1597.600 1161 L1597.600 1168.600 M1656.200 1161 L1656.200 1168.600 M1715 1161 L1715 1168.600 M1773.800 1161 L1773.800 1168.600" stroke="#6a6a6a" stroke-width="1.200"/>

<!-- ===== rating / badges ===== -->
<rect x="4.500" y="382.500" width="13" height="13" rx="2.500" fill="none" stroke="#5a5a5a" stroke-width="1.200"/>
<g fill="#ffffff"><circle cx="93.200" cy="388.600" r="1.700"/><circle cx="113.200" cy="388.600" r="1.700"/><circle cx="133.200" cy="388.600" r="1.700"/><circle cx="153.200" cy="388.600" r="1.700"/><circle cx="173.200" cy="388.600" r="1.700"/></g>
<!-- viewer info bar right -->
<rect x="1282" y="1048.500" width="11.600" height="11.600" rx="2.200" fill="none" stroke="#9a9a9a" stroke-width="1.200"/>
<g fill="#f0f0f0"><circle cx="1310" cy="1055" r="1.600"/><circle cx="1327.300" cy="1055" r="1.600"/><circle cx="1344.600" cy="1055" r="1.600"/><circle cx="1361.900" cy="1055" r="1.600"/><circle cx="1379.200" cy="1055" r="1.600"/></g>
<rect x="1398.400" y="1048.800" width="11.800" height="10.400" fill="none" stroke="#a4a4a4" stroke-width="1.600"/>
<path d="M1400.600 1051.400 L1408 1051.400 M1400.600 1054 L1408 1054 M1400.600 1056.600 L1408 1056.600" stroke="#b0b0b0" stroke-width="1.100"/>
</svg>
</body>
</html>
